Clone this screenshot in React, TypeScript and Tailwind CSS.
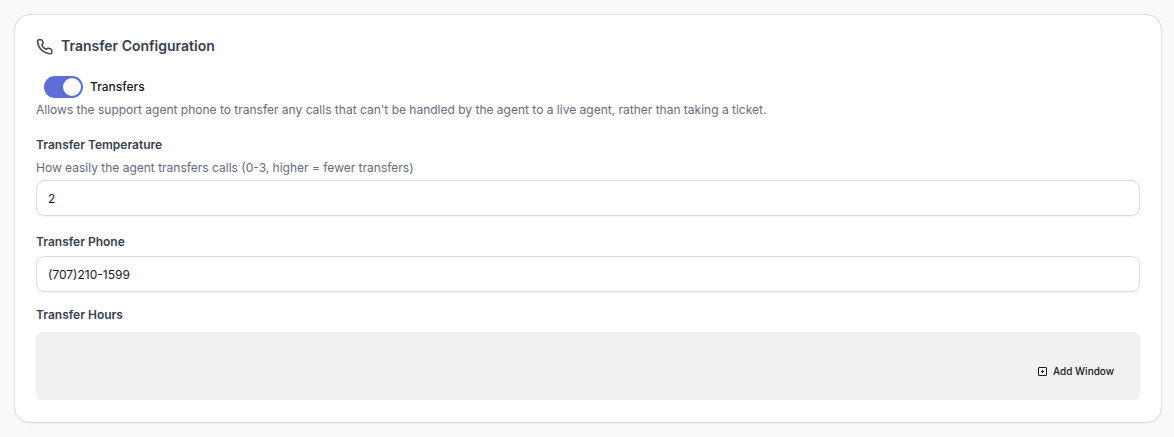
import { useState } from "react";

function PhoneIcon() {
  return (
    <svg
      viewBox="0 0 24 24"
      className="mt-px size-[17px] shrink-0"
      fill="none"
      stroke="currentColor"
      strokeWidth="2"
      strokeLinecap="round"
      strokeLinejoin="round"
      aria-hidden="true"
    >
      <path d="M4.5 2.500 7 2.300C8.200 2.300 9 3 9.300 4l.7 2.700c.2.8 0 1.400-.6 1.900L8.200 9.800c1 2.800 3.200 5 6 6.400l1.500-1.300c.6-.5 1.300-.6 2-.4l3.300 1.300c.8.3 1.400 1.100 1.400 2v2.200c0 1.500-1.100 2.500-2.600 2.400C10.500 21.800 3 14.500 2.200 5.200 2.100 3.700 3.100 2.600 4.500 2.500Z" />
    </svg>
  );
}

function AddIcon() {
  return (
    <svg viewBox="0 0 11 11" className="size-[11px] shrink-0" fill="none" stroke="currentColor" aria-hidden="true">
      <rect x="1.5" y="1.5" width="8" height="8" rx="0.5" strokeWidth="1" />
      <path d="M5.5 4v3M4 5.5h3" strokeWidth="1" />
    </svg>
  );
}

const labelClass = "block text-xs leading-5 font-semibold text-[#374151]";
const hintClass = "text-xs leading-5 text-[#676b7e]";
const inputClass =
  "block h-9 w-full rounded-lg border border-[#dcdee2] bg-white px-[11px] text-xs text-[#18181b] shadow-xs outline-none focus:border-[#5b6bd5]";

export default function App() {
  const [enabled, setEnabled] = useState(true);
  const [temperature, setTemperature] = useState("2");
  const [phone, setPhone] = useState("(707)210-1599");

  return (
    <main className="min-h-screen bg-[#f8f9fb] pt-3.5 pr-3 pb-3.5 pl-3.5 font-['Inter','Liberation_Sans',sans-serif]">
      <section className="rounded-2xl border border-[#dcdee3] bg-white px-[21px] pt-[19px] pb-[22px] shadow-xs">
        <h2 className="flex items-center gap-2 text-sm leading-6 font-semibold text-[#374151]">
          <PhoneIcon />
          Transfer Configuration
        </h2>

        <div className="mt-[18px] flex items-center gap-[7px] pl-2">
          <button
            id="transfers"
            type="button"
            role="switch"
            aria-checked={enabled}
            onClick={() => setEnabled(!enabled)}
            className={
              enabled
                ? "flex h-[22px] w-[39px] items-center justify-end rounded-full bg-[#5e6ed6] px-0.5"
                : "flex h-[22px] w-[39px] items-center justify-start rounded-full bg-[#d1d5db] px-0.5"
            }
          >
            <span className="size-[18px] rounded-full bg-white" />
          </button>
          <label htmlFor="transfers" className="text-xs leading-5 font-medium text-[#18181b]">
            Transfers
          </label>
        </div>
        <p className={`${hintClass} mt-0.5`}>
          Allows the support agent phone to transfer any calls that can't be handled by the agent to a live agent, rather than taking a ticket.
        </p>

        <div className="mt-[15px]">
          <label htmlFor="temperature" className={labelClass}>Transfer Temperature</label>
          <p id="temperature-hint" className={`${hintClass} mt-[3px] mb-0.5`}>
            How easily the agent transfers calls (0-3, higher = fewer transfers)
          </p>
          <input
            id="temperature"
            aria-describedby="temperature-hint"
            inputMode="numeric"
            value={temperature}
            onChange={(e) => setTemperature(e.target.value)}
            className={inputClass}
          />
        </div>

        <div className="mt-4">
          <label htmlFor="phone" className={`${labelClass} mb-1`}>Transfer Phone</label>
          <input
            id="phone"
            type="tel"
            value={phone}
            onChange={(e) => setPhone(e.target.value)}
            className={inputClass}
          />
        </div>

        <div className="mt-[13px]">
          <h3 className={labelClass}>Transfer Hours</h3>
          <div className="mt-[7px] flex justify-end rounded-md bg-[#f0f1f3] px-4 pt-[25px] pb-[15px]">
            <button
              type="button"
              className="flex h-7 items-center gap-[5px] rounded-md bg-[#f1f1f1] px-[10px] text-[10px] font-medium text-[#18181b]"
            >
              <AddIcon />
              Add Window
            </button>
          </div>
        </div>
      </section>
    </main>
  );
}
